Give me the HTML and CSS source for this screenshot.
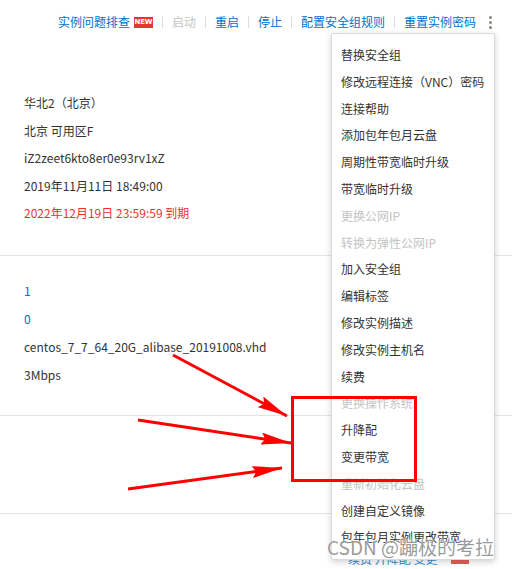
FILE: index.html
```html
<!DOCTYPE html>
<html lang="zh-CN">
<head>
<meta charset="utf-8">
<link rel="stylesheet" href="styles.css">
</head>
<body>
<div class="page">
  <div class="toolbar">
    <a class="act">实例问题排查</a><span class="badge">NEW</span>
    <span class="sep"></span>
    <span class="act disabled">启动</span>
    <span class="sep"></span>
    <a class="act">重启</a>
    <span class="sep"></span>
    <a class="act">停止</a>
    <span class="sep"></span>
    <a class="act">配置安全组规则</a>
    <span class="sep"></span>
    <a class="act">重置实例密码</a>
    <span class="more"><i></i><i></i><i></i></span>
  </div>

  <div class="section s1">
    <div class="row">华北2（北京）</div>
    <div class="row">北京 可用区F</div>
    <div class="row">iZ2zeet6kto8er0e93rv1xZ</div>
    <div class="row">2019年11月11日 18:49:00</div>
    <div class="row expire">2022年12月19日 23:59:59 到期</div>
  </div>

  <div class="section s2">
    <div class="row link">1</div>
    <div class="row link">0</div>
    <div class="row">centos_7_7_64_20G_alibase_20191008.vhd</div>
    <div class="row">3Mbps</div>
  </div>

  <div class="section s3"></div>

  <div class="bottom">
    <span class="blue-bit">续费 升降配 变更</span><span class="red-bit"></span>
  </div>

  <ul class="menu">
    <li>替换安全组</li>
    <li>修改远程连接（VNC）密码</li>
    <li>连接帮助</li>
    <li>添加包年包月云盘</li>
    <li>周期性带宽临时升级</li>
    <li>带宽临时升级</li>
    <li class="off">更换公网IP</li>
    <li class="off">转换为弹性公网IP</li>
    <li>加入安全组</li>
    <li>编辑标签</li>
    <li>修改实例描述</li>
    <li>修改实例主机名</li>
    <li>续费</li>
    <li class="off">更换操作系统</li>
    <li>升降配</li>
    <li>变更带宽</li>
    <li class="off">重新初始化云盘</li>
    <li>创建自定义镜像</li>
    <li>包年包月实例更改带宽</li>
  </ul>

  <svg class="marks" width="512" height="569" viewBox="0 0 512 569">
    <defs>
      <marker id="head" markerUnits="userSpaceOnUse" markerWidth="30" markerHeight="12" viewBox="0 0 30 12" refX="30" refY="6" orient="auto">
        <path d="M0,0 L30,6 L0,12 L4,6 z" fill="#ff0000"/>
      </marker>
    </defs>
    <line x1="173" y1="355" x2="287" y2="416" stroke="#ff0000" stroke-width="3" marker-end="url(#head)"/>
    <line x1="138" y1="420" x2="291" y2="443" stroke="#ff0000" stroke-width="3" marker-end="url(#head)"/>
    <line x1="128" y1="489" x2="282" y2="468" stroke="#ff0000" stroke-width="3" marker-end="url(#head)"/>
    <rect x="292.5" y="397.5" width="123" height="83" fill="none" stroke="#ff0000" stroke-width="3"/>
  </svg>

  <div class="watermark">CSDN @蹦极的考拉</div>
</div>
</body>
</html>
```

FILE: styles.css
```css
* { box-sizing: border-box; }
html, body {
  margin: 0;
  padding: 0;
  background: #ffffff;
}
body {
  font-family: "Noto Sans CJK SC", "Noto Sans", sans-serif;
  font-size: 12px;
  color: #333333;
}
.page {
  position: relative;
  width: 512px;
  height: 569px;
  overflow: hidden;
}
.toolbar {
  height: 44px;
  display: flex;
  align-items: center;
  justify-content: flex-end;
  padding-right: 20px;
  line-height: 16px;
}
.act {
  color: #0070cc;
  white-space: nowrap;
}
.act.disabled { color: #c4c4c4; }
.badge {
  margin-left: 4px;
  background: #e5352f;
  color: #fff;
  font-family: "DejaVu Sans", sans-serif;
  font-weight: bold;
  font-size: 7px;
  line-height: 11px;
  height: 11px;
  width: 19px;
  text-align: center;
  letter-spacing: -0.2px;
}
.sep {
  width: 1px;
  height: 12px;
  background: #dcdcdc;
  margin: 0 9px;
}
.more {
  display: flex;
  flex-direction: column;
  gap: 2px;
  margin-left: 13px;
}
.more i {
  display: block;
  width: 3px;
  height: 3px;
  border-radius: 50%;
  background: #8f8478;
}
.section {
  padding-left: 24px;
  border-bottom: 1px solid #e3e3e3;
}
.s1 {
  padding-top: 45px;
  padding-bottom: 28px;
}
.s1 .row {
  height: 27.5px;
  line-height: 27.5px;
}
.s2 {
  padding-top: 21px;
  padding-bottom: 26px;
}
.s2 .row {
  height: 28.2px;
  line-height: 28.2px;
}
.s3 { height: 98px; }
.row { white-space: nowrap; }
.expire { color: #e8332e; }
.link { color: #0070cc; }
.bottom {
  display: flex;
  align-items: center;
  padding-left: 348px;
  padding-top: 36px;
  gap: 14px;
  color: #0070cc;
  opacity: 0.8;
}
.blue-bit { white-space: nowrap; }
.red-bit {
  width: 18px;
  height: 10px;
  background: #e5352f;
}
.menu {
  position: absolute;
  left: 331px;
  top: 33px;
  width: 164px;
  margin: 0;
  padding: 8px 0;
  list-style: none;
  background: #ffffff;
  border: 1px solid #d9d9d9;
  border-radius: 2px;
  box-shadow: 0 2px 6px rgba(0, 0, 0, 0.18);
}
.menu li {
  height: 26.8px;
  line-height: 26.8px;
  padding-left: 9px;
  color: #333333;
  white-space: nowrap;
}
.menu li.off { color: #c4c4c4; }
.marks {
  position: absolute;
  left: 0;
  top: 0;
  pointer-events: none;
}
.watermark {
  position: absolute;
  left: 327px;
  top: 535px;
  font-size: 19px;
  line-height: 24px;
  color: rgba(120, 120, 120, 0.75);
  text-shadow: 0 0 1px #fff, 0 0 2px #fff;
  white-space: nowrap;
}
```
